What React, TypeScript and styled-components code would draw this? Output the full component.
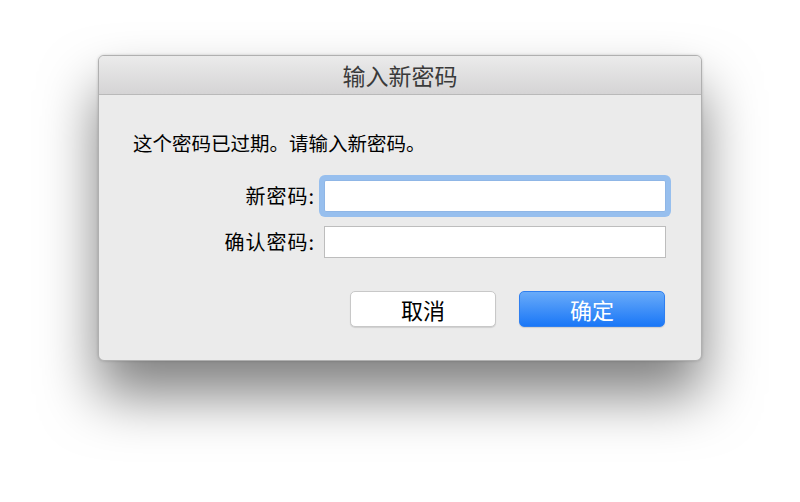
import React from "react";
import styled, { createGlobalStyle } from "styled-components";

const GlobalStyle = createGlobalStyle`
  html, body {
    margin: 0;
    padding: 0;
    background: #ffffff;
  }
  body {
    font-family: "Noto Sans CJK SC", "Noto Sans", sans-serif;
  }
`;

const Page = styled.div`
  width: 800px;
  height: 502px;
  display: flex;
  justify-content: center;
  align-items: flex-start;
  padding-top: 55px;
  box-sizing: border-box;
  background: #ffffff;
  overflow: hidden;
`;

const Window = styled.div`
  width: 604px;
  background: #ebebeb;
  border: 1px solid #b0b0b0;
  border-radius: 6px;
  box-shadow: 0 34px 56px rgba(0, 0, 0, 0.5), 0 0 3px rgba(0, 0, 0, 0.18);
  overflow: hidden;
  display: flex;
  flex-direction: column;
  box-sizing: border-box;
`;

const TitleBar = styled.div`
  height: 39px;
  background: linear-gradient(#ebebeb, #d5d4d5);
  border-bottom: 1px solid #b9b9b9;
  display: flex;
  align-items: center;
  justify-content: center;
  font-size: 23px;
  color: #3a3a3a;
  box-sizing: border-box;
`;

const Body = styled.div`
  padding: 36px 36px 33px 34px;
  display: flex;
  flex-direction: column;
`;

const Message = styled.div`
  font-size: 19.5px;
  line-height: 24px;
  color: #000;
`;

const Form = styled.div`
  display: grid;
  grid-template-columns: 182px 1fr;
  column-gap: 8px;
  row-gap: 14px;
  margin-top: 25px;
  align-items: center;
`;

const Label = styled.label`
  font-size: 20px;
  line-height: 24px;
  letter-spacing: 1px;
  color: #000;
  text-align: right;
`;

const Field = styled.input<{ $focused?: boolean }>`
  height: 32px;
  width: 342px;
  box-sizing: border-box;
  border: 1px solid ${(p) => (p.$focused ? "#8fb6e6" : "#bdbdbd")};
  background: #fff;
  outline: none;
  box-shadow: ${(p) => (p.$focused ? "0 0 0 5px #97bfee" : "none")};
  border-radius: ${(p) => (p.$focused ? "2px" : "0")};
  margin-left: 1px;
`;

const Buttons = styled.div`
  display: flex;
  justify-content: flex-end;
  gap: 23px;
  margin-top: 33px;
`;

const Button = styled.button<{ $primary?: boolean }>`
  width: 146px;
  height: 36px;
  border-radius: 5px;
  font-family: "Noto Sans CJK SC", "Noto Sans", sans-serif;
  font-size: 22px;
  border: 1px solid ${(p) => (p.$primary ? "#2f7ff0" : "#c8c8c8")};
  background: ${(p) =>
    p.$primary ? "linear-gradient(#69abf9, #1a77f7)" : "#ffffff"};
  color: ${(p) => (p.$primary ? "#ffffff" : "#000")};
  box-shadow: 0 1px 1px rgba(0, 0, 0, 0.12);
  display: flex;
  align-items: center;
  justify-content: center;
  padding: 0;
`;

const App: React.FC = () => {
  return (
    <>
      <GlobalStyle />
      <Page>
        <Window>
          <TitleBar>输入新密码</TitleBar>
          <Body>
            <Message>这个密码已过期。请输入新密码。</Message>
            <Form>
              <Label>新密码:</Label>
              <Field type="password" $focused />
              <Label>确认密码:</Label>
              <Field type="password" />
            </Form>
            <Buttons>
              <Button>取消</Button>
              <Button $primary>确定</Button>
            </Buttons>
          </Body>
        </Window>
      </Page>
    </>
  );
};

export default App;
